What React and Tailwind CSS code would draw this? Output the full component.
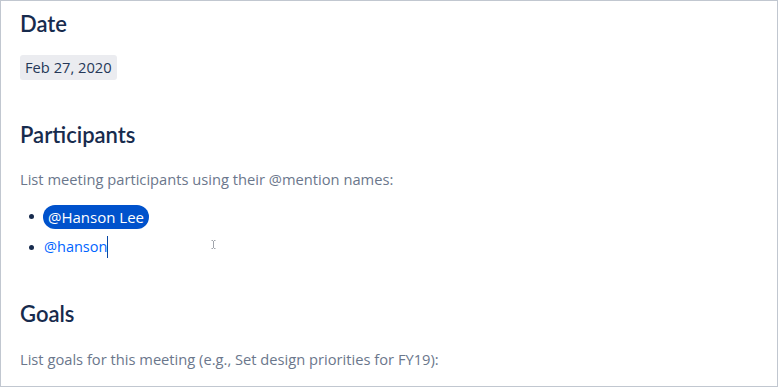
import React from 'react';

const bodyFont = { fontFamily: '"Open Sans", "Noto Sans", sans-serif' };
const headFont = { fontFamily: 'Lato, "Noto Sans", sans-serif' };

const Heading = ({ children, className = '' }) => (
    <h2 className={`text-[22px] leading-[30px] font-semibold text-[#172b4d] ${className}`} style={headFont}>{children}</h2>
);

const Hint = ({ children, className = '' }) => (
    <p className={`text-[14.7px] leading-[20px] text-[#6b778c] ${className}`}>{children}</p>
);

export default function App() {
    return (
        <div className="w-[778px] h-[387px] bg-white border border-[#c1c7d0] overflow-hidden relative" style={bodyFont}>
            <div className="pl-[19px] pt-[8px]">
                <Heading>Date</Heading>
                <div className="mt-[16px] h-[25px]">
                    <span className="inline-block bg-[#ebecf0] rounded-[3px] px-[5px] h-[25px] leading-[25px] text-[14.7px] text-[#253858]">Feb 27, 2020</span>
                </div>

                <Heading className="mt-[40px]">Participants</Heading>
                <Hint className="mt-[19px]">List meeting participants using their @mention names:</Hint>

                <ul className="mt-[15px] pl-[9px]">
                    <li className="flex items-center h-[25px]">
                        <span className="w-[5px] h-[5px] rounded-full bg-[#172b4d] mr-[9px]" />
                        <span className="bg-[#0052cc] text-white rounded-full px-[5px] h-[24px] leading-[24px] text-[15px]">@Hanson Lee</span>
                    </li>
                    <li className="flex items-center h-[30px] mt-[3px]">
                        <span className="w-[5px] h-[5px] rounded-full bg-[#172b4d] mr-[10px]" />
                        <span className="text-[14.5px] text-[#0065ff]">@hanson</span>
                        <span className="w-px h-[22px] bg-[#0747a6]" />
                    </li>
                </ul>

                <Heading className="mt-[37px]">Goals</Heading>
                <Hint className="mt-[20px]">List goals for this meeting (e.g., Set design priorities for FY19):</Hint>
            </div>

            {/* mouse i-beam */}
            <svg className="absolute left-[210px] top-[239px]" width="5" height="9" viewBox="0 0 5 9">
                <path d="M0.5 0.5h1.5M3 0.5h1.5M2.5 1v7M0.5 8.5h1.5M3 8.5h1.5" stroke="#a0a4ab" strokeWidth="1" fill="none" />
            </svg>
        </div>
    );
}
